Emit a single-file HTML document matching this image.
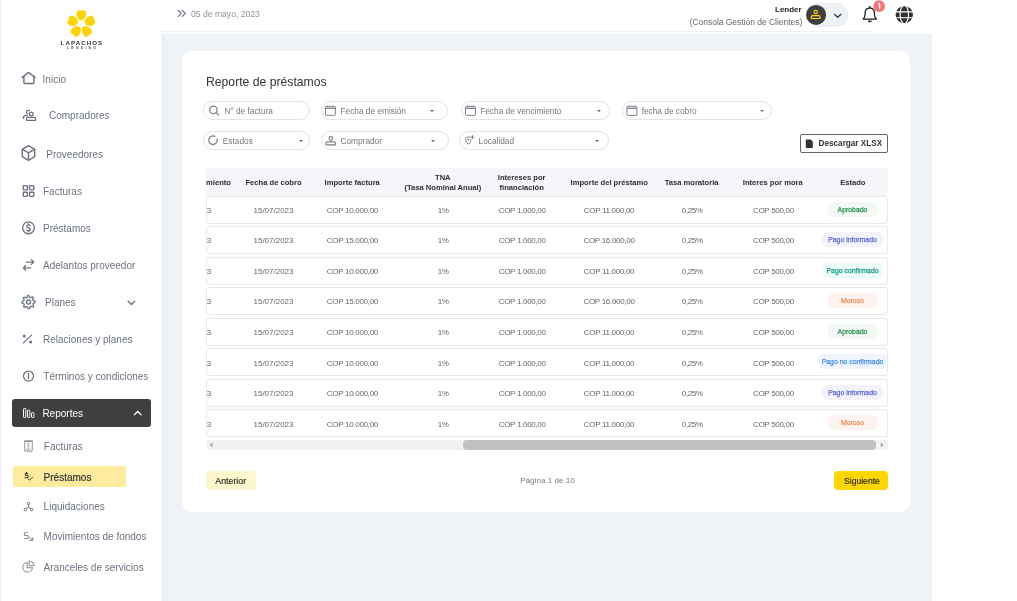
<!DOCTYPE html>
<html><head><meta charset="utf-8">
<style>
*{box-sizing:border-box;margin:0;padding:0}
html,body{width:1017px;height:601px;overflow:hidden;background:#fff;font-family:"Liberation Sans",sans-serif}
.a{position:absolute;white-space:nowrap}
#side{position:absolute;left:0;top:0;width:162px;height:601px;background:#fff;border-left:1px solid #eff2f7;box-shadow:inset 1px 0 0 #f7f8fb}
.nav{position:absolute;font-size:10px;color:#6b7280;line-height:12px;white-space:nowrap}
svg{position:absolute;overflow:visible}
#main{position:absolute;left:162px;top:34px;width:770px;height:567px;background:#eff2f7;box-shadow:inset 1px 0 0 #e2e5ea}
#hdrline{position:absolute;left:161px;top:31px;width:712px;height:1px;background:#eef0f3}
#card{position:absolute;left:182.2px;top:51px;width:727.8px;height:461.2px;background:#fff;border-radius:10px}
.pill{position:absolute;height:19px;border:1px solid #e3e3e3;border-radius:10px;background:#fff}
.pill .t{position:absolute;top:3.8px;font-size:8.3px;color:#777;line-height:10px;white-space:nowrap}
.caret{position:absolute;top:7.5px;width:0;height:0;border-left:2.5px solid transparent;border-right:2.5px solid transparent;border-top:2.5px solid #666}
.th{position:absolute;font-size:7.6px;font-weight:bold;color:#2e2e2e;text-align:center;line-height:10px;white-space:nowrap;transform:translateX(-50%)}
.row{position:absolute;left:206px;width:682px;height:28px;border:1px solid #e8e8e8;border-radius:3px;background:#fff}
.td{position:absolute;font-size:8px;color:#666;line-height:10px;white-space:nowrap;transform:translateX(-50%)}
.bd{position:absolute;height:15.2px;border-radius:6px;font-size:6.9px;line-height:15.2px;-webkit-text-stroke:0.25px currentColor;text-align:center;transform:translateX(-50%);white-space:nowrap}
</style></head><body><div id="root" style="position:absolute;left:0;top:0;width:1017px;height:601px;will-change:transform">
<div id="side"></div>
<div class="nav" style="left:42.6px;top:73.6px">Inicio</div>
<div class="nav" style="left:49px;top:110.4px">Compradores</div>
<div class="nav" style="left:46.3px;top:148.5px">Proveedores</div>
<div class="nav" style="left:43px;top:186.4px">Facturas</div>
<div class="nav" style="left:43px;top:223.0px">Préstamos</div>
<div class="nav" style="left:43px;top:259.8px">Adelantos proveedor</div>
<div class="nav" style="left:45px;top:297.2px">Planes</div>
<div class="nav" style="left:43px;top:333.8px">Relaciones y planes</div>
<div class="nav" style="left:43.3px;top:371.1px">Términos y condiciones</div>
<div class="a" style="left:12px;top:399px;width:139px;height:28px;background:#3f3f3f;border-radius:3px"></div>
<div class="nav" style="left:42.4px;top:407.70000000000005px;color:#fff">Reportes</div>
<div class="a" style="left:12.5px;top:466.4px;width:113.4px;height:20.2px;background:#fdeba0;border-radius:2.5px"></div>
<div class="nav" style="left:43.8px;top:441.4px;color:#6b7280">Facturas</div>
<div class="nav" style="left:43.6px;top:471.5px;color:#333;-webkit-text-stroke:0.2px #333">Préstamos</div>
<div class="nav" style="left:43.6px;top:501.4px;color:#6b7280">Liquidaciones</div>
<div class="nav" style="left:43.6px;top:531.4px;color:#6b7280">Movimientos de fondos</div>
<div class="nav" style="left:43.6px;top:562.4px;color:#6b7280">Aranceles de servicios</div>
<div id="hdrline"></div>
<div class="a" style="left:191px;top:8.5px;font-size:8.6px;color:#8e939b;line-height:10px">05 de mayo, 2023</div>
<div class="a" style="left:775px;top:5px;font-size:8px;font-weight:bold;color:#222;line-height:10px">Lender</div>
<div class="a" style="left:689.7px;top:16.5px;font-size:8.45px;color:#666;line-height:10px">(Consola Gestión de Clientes)</div>
<div id="main"></div>
<div id="card"></div>
<div class="a" style="left:206px;top:74.8px;font-size:12.2px;color:#333;line-height:14px">Reporte de préstamos</div>
<div class="pill" style="left:203.3px;top:101px;width:106.5px"><div class="t" style="left:20.099999999999994px">N° de factura</div></div>
<div class="pill" style="left:320.5px;top:101px;width:127.5px"><div class="t" style="left:19.0px">Fecha de emisión</div><div class="caret" style="left:108.10000000000002px"></div></div>
<div class="pill" style="left:460.5px;top:101px;width:149.5px"><div class="t" style="left:18.69999999999999px">Fecha de vencimiento</div><div class="caret" style="left:135.39999999999998px"></div></div>
<div class="pill" style="left:622px;top:101px;width:150.3px"><div class="t" style="left:18.700000000000045px">fecha de cobro</div><div class="caret" style="left:136.89999999999998px"></div></div>
<div class="pill" style="left:203.3px;top:131px;width:106.5px"><div class="t" style="left:18.5px">Estados</div><div class="caret" style="left:95.0px"></div></div>
<div class="pill" style="left:321px;top:131px;width:127.6px"><div class="t" style="left:18.5px">Comprador</div><div class="caret" style="left:108.69999999999999px"></div></div>
<div class="pill" style="left:459.4px;top:131px;width:149.5px"><div class="t" style="left:18.200000000000045px">Localidad</div><div class="caret" style="left:134.5px"></div></div>
<div class="a" style="left:800px;top:134.2px;width:88px;height:18.8px;border:1px solid #666;border-radius:2px;background:#fff"></div>
<div class="a" style="left:818.5px;top:139.1px;font-size:8.2px;font-weight:bold;color:#333;line-height:10px">Descargar XLSX</div>
<div class="a" style="left:206px;top:168.3px;width:682px;height:27.3px;background:#f5f5fa;border-radius:3px 3px 0 0"></div>
<div class="th" style="left:273.5px;top:178px">Fecha de cobro</div>
<div class="th" style="left:352.2px;top:178px">Importe factura</div>
<div class="th" style="left:442.8px;top:173px">TNA<br>(Tasa Nominal Anual)</div>
<div class="th" style="left:521.7px;top:173px">Intereses por<br>financiación</div>
<div class="th" style="left:609.2px;top:178px">Importe del préstamo</div>
<div class="th" style="left:691.6px;top:178px">Tasa moratoria</div>
<div class="th" style="left:772.8px;top:178px">Interes por mora</div>
<div class="th" style="left:852.8px;top:178px">Estado</div>
<div class="th" style="left:206px;top:178px;transform:none;width:25px;overflow:hidden;direction:rtl;text-align:right">miento</div>
<div class="row" style="top:195.50px"></div>
<div class="td" style="left:209px;top:205.90px">3</div>
<div class="td" style="left:273.5px;top:205.90px;letter-spacing:0px">15/07/2023</div>
<div class="td" style="left:352.4px;top:205.90px;letter-spacing:-0.3px">COP 10.000,00</div>
<div class="td" style="left:443.2px;top:205.90px;letter-spacing:-0.4px">1%</div>
<div class="td" style="left:522.2px;top:205.90px;letter-spacing:-0.3px">COP 1.000,00</div>
<div class="td" style="left:609px;top:205.90px;letter-spacing:-0.3px">COP 11.000,00</div>
<div class="td" style="left:692.2px;top:205.90px;letter-spacing:-0.4px">0,25%</div>
<div class="td" style="left:773.4px;top:205.90px;letter-spacing:-0.3px">COP 500,00</div>
<div class="bd" style="left:852.5px;top:201.50px;width:50.5px;background:#f2f9f4;color:#2f8f55">Aprobado</div>
<div class="row" style="top:226.02px"></div>
<div class="td" style="left:209px;top:236.42px">3</div>
<div class="td" style="left:273.5px;top:236.42px;letter-spacing:0px">15/07/2023</div>
<div class="td" style="left:352.4px;top:236.42px;letter-spacing:-0.3px">COP 15.000,00</div>
<div class="td" style="left:443.2px;top:236.42px;letter-spacing:-0.4px">1%</div>
<div class="td" style="left:522.2px;top:236.42px;letter-spacing:-0.3px">COP 1.000,00</div>
<div class="td" style="left:609px;top:236.42px;letter-spacing:-0.3px">COP 16.000,00</div>
<div class="td" style="left:692.2px;top:236.42px;letter-spacing:-0.4px">0,25%</div>
<div class="td" style="left:773.4px;top:236.42px;letter-spacing:-0.3px">COP 500,00</div>
<div class="bd" style="left:852.5px;top:232.02px;width:61.7px;background:#f3f2fb;color:#5b6bd6">Pago informado</div>
<div class="row" style="top:256.54px"></div>
<div class="td" style="left:209px;top:266.94px">3</div>
<div class="td" style="left:273.5px;top:266.94px;letter-spacing:0px">15/07/2023</div>
<div class="td" style="left:352.4px;top:266.94px;letter-spacing:-0.3px">COP 10.000,00</div>
<div class="td" style="left:443.2px;top:266.94px;letter-spacing:-0.4px">1%</div>
<div class="td" style="left:522.2px;top:266.94px;letter-spacing:-0.3px">COP 1.000,00</div>
<div class="td" style="left:609px;top:266.94px;letter-spacing:-0.3px">COP 11.000,00</div>
<div class="td" style="left:692.2px;top:266.94px;letter-spacing:-0.4px">0,25%</div>
<div class="td" style="left:773.4px;top:266.94px;letter-spacing:-0.3px">COP 500,00</div>
<div class="bd" style="left:852.5px;top:262.54px;width:61.7px;background:#ebfcf8;color:#1e9c86">Pago confirmado</div>
<div class="row" style="top:287.06px"></div>
<div class="td" style="left:209px;top:297.46px">3</div>
<div class="td" style="left:273.5px;top:297.46px;letter-spacing:0px">15/07/2023</div>
<div class="td" style="left:352.4px;top:297.46px;letter-spacing:-0.3px">COP 15.000,00</div>
<div class="td" style="left:443.2px;top:297.46px;letter-spacing:-0.4px">1%</div>
<div class="td" style="left:522.2px;top:297.46px;letter-spacing:-0.3px">COP 1.000,00</div>
<div class="td" style="left:609px;top:297.46px;letter-spacing:-0.3px">COP 16.000,00</div>
<div class="td" style="left:692.2px;top:297.46px;letter-spacing:-0.4px">0,25%</div>
<div class="td" style="left:773.4px;top:297.46px;letter-spacing:-0.3px">COP 500,00</div>
<div class="bd" style="left:852.5px;top:293.06px;width:50.5px;background:#fef2ee;color:#e8935e">Moroso</div>
<div class="row" style="top:317.58px"></div>
<div class="td" style="left:209px;top:327.98px">3</div>
<div class="td" style="left:273.5px;top:327.98px;letter-spacing:0px">15/07/2023</div>
<div class="td" style="left:352.4px;top:327.98px;letter-spacing:-0.3px">COP 10.000,00</div>
<div class="td" style="left:443.2px;top:327.98px;letter-spacing:-0.4px">1%</div>
<div class="td" style="left:522.2px;top:327.98px;letter-spacing:-0.3px">COP 1.000,00</div>
<div class="td" style="left:609px;top:327.98px;letter-spacing:-0.3px">COP 11.000,00</div>
<div class="td" style="left:692.2px;top:327.98px;letter-spacing:-0.4px">0,25%</div>
<div class="td" style="left:773.4px;top:327.98px;letter-spacing:-0.3px">COP 500,00</div>
<div class="bd" style="left:852.5px;top:323.58px;width:50.5px;background:#f2f9f4;color:#2f8f55">Aprobado</div>
<div class="row" style="top:348.10px"></div>
<div class="td" style="left:209px;top:358.50px">3</div>
<div class="td" style="left:273.5px;top:358.50px;letter-spacing:0px">15/07/2023</div>
<div class="td" style="left:352.4px;top:358.50px;letter-spacing:-0.3px">COP 10.000,00</div>
<div class="td" style="left:443.2px;top:358.50px;letter-spacing:-0.4px">1%</div>
<div class="td" style="left:522.2px;top:358.50px;letter-spacing:-0.3px">COP 1.000,00</div>
<div class="td" style="left:609px;top:358.50px;letter-spacing:-0.3px">COP 11.000,00</div>
<div class="td" style="left:692.2px;top:358.50px;letter-spacing:-0.4px">0,25%</div>
<div class="td" style="left:773.4px;top:358.50px;letter-spacing:-0.3px">COP 500,00</div>
<div class="bd" style="left:852.5px;top:354.10px;width:70.4px;background:#eef5fe;color:#4a90e2">Pago no confirmado</div>
<div class="row" style="top:378.62px"></div>
<div class="td" style="left:209px;top:389.02px">3</div>
<div class="td" style="left:273.5px;top:389.02px;letter-spacing:0px">15/07/2023</div>
<div class="td" style="left:352.4px;top:389.02px;letter-spacing:-0.3px">COP 10.000,00</div>
<div class="td" style="left:443.2px;top:389.02px;letter-spacing:-0.4px">1%</div>
<div class="td" style="left:522.2px;top:389.02px;letter-spacing:-0.3px">COP 1.000,00</div>
<div class="td" style="left:609px;top:389.02px;letter-spacing:-0.3px">COP 11.000,00</div>
<div class="td" style="left:692.2px;top:389.02px;letter-spacing:-0.4px">0,25%</div>
<div class="td" style="left:773.4px;top:389.02px;letter-spacing:-0.3px">COP 500,00</div>
<div class="bd" style="left:852.5px;top:384.62px;width:61.7px;background:#f3f2fb;color:#5b6bd6">Pago informado</div>
<div class="row" style="top:409.14px"></div>
<div class="td" style="left:209px;top:419.54px">3</div>
<div class="td" style="left:273.5px;top:419.54px;letter-spacing:0px">15/07/2023</div>
<div class="td" style="left:352.4px;top:419.54px;letter-spacing:-0.3px">COP 10.000,00</div>
<div class="td" style="left:443.2px;top:419.54px;letter-spacing:-0.4px">1%</div>
<div class="td" style="left:522.2px;top:419.54px;letter-spacing:-0.3px">COP 1.000,00</div>
<div class="td" style="left:609px;top:419.54px;letter-spacing:-0.3px">COP 11.000,00</div>
<div class="td" style="left:692.2px;top:419.54px;letter-spacing:-0.4px">0,25%</div>
<div class="td" style="left:773.4px;top:419.54px;letter-spacing:-0.3px">COP 500,00</div>
<div class="bd" style="left:852.5px;top:415.14px;width:50.5px;background:#fef2ee;color:#e8935e">Moroso</div>
<div class="a" style="left:206px;top:440px;width:682px;height:10px;background:#f1f1f1;border-radius:3px"></div>
<div class="a" style="left:463px;top:440px;width:413px;height:10px;background:#c1c1c1;border-radius:4px"></div>
<div class="a" style="left:205.6px;top:470.9px;width:50px;height:19.4px;background:#fef6cc;border-radius:4px"></div>
<div class="a" style="left:215.3px;top:475.5px;font-size:8.8px;color:#2a2a2a;-webkit-text-stroke:0.15px #2a2a2a;line-height:10px">Anterior</div>
<div class="a" style="left:520.2px;top:475.8px;font-size:8.1px;color:#7a7a7a;line-height:10px">Página 1 de 10</div>
<div class="a" style="left:834.2px;top:470.6px;width:54px;height:19.7px;background:#ffd600;border-radius:4px"></div>
<div class="a" style="left:844px;top:475.5px;font-size:8.6px;color:#2a2a2a;-webkit-text-stroke:0.15px #2a2a2a;line-height:10px">Siguiente</div>
<svg width="1017" height="601" style="left:0;top:0;position:absolute" viewBox="0 0 1017 601"><path fill="none" stroke="#6b7280" stroke-width="1.4" stroke-linecap="round" stroke-linejoin="round" d="M21.9,77.6 L28.5,72.4 L35.1,77.6 M23.9,76 V82.6 Q23.9,83.5 24.8,83.5 H33.1 Q34,83.5 34,82.6 V76"/><g fill="none" stroke="#6b7280" stroke-width="1.25" stroke-linecap="round" stroke-linejoin="round"><circle cx="31.3" cy="113.9" r="1.9"/><path d="M26.5,120.3 V118.8 Q26.5,117.4 28,117.4 H34.2 Q35.6,117.4 35.6,118.8 V120.3 Z"/><path d="M29.4,110.6 Q28.9,110.3 28.2,110.3 Q26.4,110.3 26.4,112.1 Q26.4,113.4 27.6,113.8"/><path d="M27.4,115.6 H25.6 Q23.4,115.6 23.4,117.8 V118.4"/></g><g fill="none" stroke="#6b7280" stroke-width="1.4" stroke-linecap="round" stroke-linejoin="round"><path d="M28.5,145.6 L34.7,149.3 V156.7 L28.5,160.3 L22.3,156.7 V149.3 Z"/><path d="M22.5,149.4 L28.5,152.8 L34.5,149.4 M28.5,152.8 V160"/></g><g fill="none" stroke="#6b7280" stroke-width="1.35" stroke-linecap="round" stroke-linejoin="round"><rect x="23.3" y="185.6" width="4.1" height="4.3" rx="0.6"/><rect x="29.5" y="185.6" width="4.3" height="4.3" rx="0.6"/><rect x="23.3" y="192.2" width="4.1" height="4.1" rx="0.6"/><rect x="29.5" y="192.2" width="4.3" height="4.1" rx="0.6"/></g><g fill="none" stroke="#6b7280" stroke-width="1.4" stroke-linecap="round" stroke-linejoin="round"><circle cx="28.5" cy="227.8" r="5.9"/><path d="M30.1,225.6 Q29.6,224.9 28.5,224.9 Q26.8,224.9 26.8,226.4 Q26.8,227.5 28.5,227.8 Q30.3,228.1 30.3,229.3 Q30.3,230.8 28.5,230.8 Q27.2,230.8 26.7,230 M28.5,223.8 V224.9 M28.5,230.8 V231.8"/></g><g fill="none" stroke="#6b7280" stroke-width="1.25" stroke-linecap="round" stroke-linejoin="round"><path d="M26.3,262 H33.5 M31.4,259.6 L33.7,262 L31.4,264.4"/><path d="M30.7,267.9 H23.5 M25.6,265.5 L23.3,267.9 L25.6,270.3"/></g><g fill="none" stroke="#6b7280" stroke-width="1.3" stroke-linecap="round" stroke-linejoin="round"><path d="M27.53,295.57 L28.82,295.51 L29.69,297.35 L30.60,297.67 L32.43,296.80 L33.39,297.67 L32.70,299.58 L33.11,300.45 L35.03,301.13 L35.09,302.42 L33.25,303.29 L32.93,304.20 L33.80,306.03 L32.93,306.99 L31.02,306.30 L30.15,306.71 L29.47,308.63 L28.18,308.69 L27.31,306.85 L26.40,306.53 L24.57,307.40 L23.61,306.53 L24.30,304.62 L23.89,303.75 L21.97,303.07 L21.91,301.78 L23.75,300.91 L24.07,300.00 L23.20,298.17 L24.07,297.21 L25.98,297.90 L26.85,297.49Z"/><circle cx="28.5" cy="302.1" r="2.1"/></g><path fill="none" stroke="#6b7280" stroke-width="1.4" stroke-linecap="round" stroke-linejoin="round" d="M128.2,301.3 L131.5,304.5 L134.7,301.3"/><g fill="#6b7280"><circle cx="24.3" cy="336.1" r="1.5"/><circle cx="30.6" cy="341.9" r="1.5"/></g><path fill="none" stroke="#6b7280" stroke-width="1.25" stroke-linecap="round" stroke-linejoin="round" d="M23.4,342.9 L31.6,335.1"/><g fill="none" stroke="#6b7280" stroke-width="1.3" stroke-linecap="round" stroke-linejoin="round"><circle cx="28.5" cy="376.1" r="5"/><path d="M28.5,373.5 V378.5"/></g><path fill="none" stroke="#fff" stroke-width="1.3" stroke-linecap="round" stroke-linejoin="round" d="M134.3,414.9 L137.7,411.3 L141.1,414.9"/><g fill="none" stroke="#fff" stroke-width="0.95"><rect x="23.5" y="408.5" width="2.3" height="9" rx="0.7"/><rect x="27.5" y="410.2" width="2.3" height="7.3" rx="0.7"/><rect x="31.5" y="412.6" width="2.4" height="4.9" rx="0.7"/></g><g fill="none" stroke="#8a8f98" stroke-width="0.9"><path d="M24.6,441.2 H32.3 V450.9 H24.6 Z"/><path d="M24.4,441.1 H32.5" stroke-width="1.4"/><path d="M29.3,443.4 Q28.9,443.1 28.4,443.1 Q27.4,443.2 27.4,444.1 Q27.5,444.9 28.4,445.2 Q29.4,445.6 29.3,446.4 Q29.2,447.2 28.3,447.2 Q27.7,447.2 27.4,446.9 M26.3,449 H30.6"/></g><g fill="#8a8f98"><rect x="25" y="451.3" width="0.8" height="1" /><rect x="27" y="451.3" width="0.8" height="1"/><rect x="29" y="451.3" width="0.8" height="1"/><rect x="31" y="451.3" width="0.8" height="1"/></g><g fill="none" stroke="#333" stroke-width="1.05" stroke-linecap="round" stroke-linejoin="round"><path d="M27.7,473.4 H25.4 V475.2 H27.4 Q28,475.2 28,476 V477.3 Q28,477.8 27.4,477.8 H24.9 M26.5,472.3 V473.3"/><path d="M28.3,478.9 L29.5,480.3 L32.5,477.2" stroke-width="0.9" stroke-dasharray="0.9 0.5"/></g><g fill="none" stroke="#8a8f98" stroke-width="1.05"><circle cx="28.5" cy="503.5" r="1.3"/><circle cx="25.4" cy="509.6" r="1.3"/><circle cx="31.6" cy="509.6" r="1.3"/><path d="M28.5,504.8 V507 L26.3,508.6 M28.5,507 L30.7,508.6"/></g><g fill="none" stroke="#8a8f98" stroke-width="1.05" stroke-linecap="round" stroke-linejoin="round"><path d="M27.7,532.8 H24.4 V535.4 H27.2 Q28,535.4 28,536.2 V537.9 Q28,538.5 27.3,538.5 H24.2"/><path d="M29.3,537 L32.7,540.4 M29.6,540.4 H32.7 V537.4"/></g><g fill="none" stroke="#8a8f98" stroke-width="1.05" stroke-linejoin="round"><path d="M27.2,562.5 A4.8,4.8 0 1 0 32.4,567.7 H27.2 Z"/><path d="M29.2,560.9 V565.7 H34 A4.8,4.8 0 0 0 29.2,560.9 Z"/></g><path fill="none" stroke="#6b7280" stroke-width="1.25" stroke-linecap="round" stroke-linejoin="round" d="M178.3,10.5 L181.3,13.4 L178.3,16.4 M182.3,10.5 L185.3,13.4 L182.3,16.4"/><rect x="806.2" y="3.4" width="41.8" height="23" rx="11.5" fill="#eef1f6" stroke="#e1e5ec" stroke-width="0.6"/><circle cx="816.1" cy="14.9" r="10" fill="#3f3f3f"/><g fill="none" stroke="#ffd600" stroke-width="1.1"><circle cx="815.7" cy="11.9" r="1.7"/><path d="M811.3,18.5 V16.9 Q811.3,15.6 812.6,15.6 H818.8 Q820.1,15.6 820.1,16.9 V18.5 Z"/></g><path fill="none" stroke="#333" stroke-width="1.2" stroke-linecap="round" stroke-linejoin="round" d="M834.4,14.3 L837.7,17.3 L841,14.3"/><g fill="none" stroke="#1a1a1a" stroke-width="1.25" stroke-linejoin="round"><path d="M863.2,19 H876.3 Q874.4,17.2 874.4,14.6 V12.8 Q874.4,8 869.8,8 Q865.1,8 865.1,12.8 V14.6 Q865.1,17.2 863.2,19 Z"/></g><circle cx="869.8" cy="6.9" r="0.9" fill="#1a1a1a"/><path d="M868.1,21 Q869.8,23.2 871.5,21 Z" fill="#1a1a1a" stroke="#1a1a1a" stroke-width="0.8"/><circle cx="879.2" cy="6.1" r="5.8" fill="#f77474"/><g><circle cx="904.3" cy="14.6" r="8.7" fill="#333"/><g fill="none" stroke="#fff" stroke-width="1.15"><path d="M895,11.8 H913.6 M895,17.7 H913.6"/><ellipse cx="904.3" cy="14.6" rx="4.2" ry="9.2"/></g></g><g fill="none" stroke="#7b8089" stroke-width="1.25" stroke-linecap="round" stroke-linejoin="round"><circle cx="213.4" cy="109.9" r="3.7"/><path d="M216.2,112.7 L218.6,115.1"/></g><path fill="none" stroke="#7b8089" stroke-width="1.25" stroke-linecap="round" stroke-linejoin="round" d="M214.9,136.4 A4.3,4.3 0 1 0 217.1,139"/><g fill="none" stroke="#7b8089" stroke-width="1"><rect x="325.4" y="106.4" width="10" height="9" rx="0.9"/><path d="M325.4,108.3 H335.4" stroke-width="1.3"/><path d="M327.4,105.6 V106.6 M333.4,105.6 V106.6"/></g><g fill="none" stroke="#7b8089" stroke-width="1"><rect x="465.5" y="106.4" width="10" height="9" rx="0.9"/><path d="M465.5,108.3 H475.5" stroke-width="1.3"/><path d="M467.5,105.6 V106.6 M473.5,105.6 V106.6"/></g><g fill="none" stroke="#7b8089" stroke-width="1"><rect x="626.9" y="106.4" width="10" height="9" rx="0.9"/><path d="M626.9,108.3 H636.9" stroke-width="1.3"/><path d="M628.9,105.6 V106.6 M634.9,105.6 V106.6"/></g><g fill="none" stroke="#7b8089" stroke-width="1.2" stroke-linecap="round" stroke-linejoin="round"><circle cx="330.8" cy="138.4" r="1.8"/><path d="M326.1,144.9 V143.2 Q326.1,141.9 327.4,141.9 H334.2 Q335.5,141.9 335.5,143.2 V144.9 Z"/></g><g fill="none" stroke="#7b8089" stroke-width="1" stroke-linecap="round" stroke-linejoin="round"><path d="M470.5,137.6 Q469.6,136.8 468.3,136.8 Q465.6,136.8 465.6,139.6 Q465.6,141.8 468.4,144.3 Q471.1,141.8 471.1,139.9"/><circle cx="468.3" cy="139.6" r="0.6" fill="#6b7280"/><path d="M472.4,135.6 V138.6 M470.9,137.1 H473.9"/></g><path fill="#333" d="M805.8,139.4 H810.6 L812.8,141.6 V147.9 H805.8 Z"/><path fill="#a3a3a3" d="M212.5,442.5 L209.8,445 L212.5,447.5 Z M880.8,442.5 L883.5,445 L880.8,447.5 Z"/></svg>
<svg width="1017" height="601" style="left:0;top:0;position:absolute" viewBox="0 0 1017 601"><path fill="none" stroke="#fff" stroke-width="1.3" stroke-linejoin="round" d="M878.2,4.4 L879.6,3.4 V9.2"/></svg>
<svg width="1017" height="601" style="left:0;top:0;position:absolute" viewBox="0 0 1017 601"><path transform="translate(81.3,23.9) rotate(0)" d="M-2.9,-4.9 L-4,-6.6 L-4.7,-8.8 L-4.8,-10.6 L-4.2,-12.5 L-2.4,-14 L0,-13.2 L2.4,-14 L4.2,-12.5 L4.8,-10.6 L4.7,-8.8 L4,-6.6 L2.9,-4.9 L1.7,-3.6 L1.2,-4.6 L0.6,-2.9 L0,-4.2 L-0.6,-2.9 L-1.2,-4.6 L-1.7,-3.6 Z" fill="#ffd200"/><path transform="translate(81.3,23.9) rotate(72)" d="M-2.9,-4.9 L-4,-6.6 L-4.7,-8.8 L-4.8,-10.6 L-4.2,-12.5 L-2.4,-14 L0,-13.2 L2.4,-14 L4.2,-12.5 L4.8,-10.6 L4.7,-8.8 L4,-6.6 L2.9,-4.9 L1.7,-3.6 L1.2,-4.6 L0.6,-2.9 L0,-4.2 L-0.6,-2.9 L-1.2,-4.6 L-1.7,-3.6 Z" fill="#ffd200"/><path transform="translate(81.3,23.9) rotate(144)" d="M-2.9,-4.9 L-4,-6.6 L-4.7,-8.8 L-4.8,-10.6 L-4.2,-12.5 L-2.4,-14 L0,-13.2 L2.4,-14 L4.2,-12.5 L4.8,-10.6 L4.7,-8.8 L4,-6.6 L2.9,-4.9 L1.7,-3.6 L1.2,-4.6 L0.6,-2.9 L0,-4.2 L-0.6,-2.9 L-1.2,-4.6 L-1.7,-3.6 Z" fill="#ffd200"/><path transform="translate(81.3,23.9) rotate(216)" d="M-2.9,-4.9 L-4,-6.6 L-4.7,-8.8 L-4.8,-10.6 L-4.2,-12.5 L-2.4,-14 L0,-13.2 L2.4,-14 L4.2,-12.5 L4.8,-10.6 L4.7,-8.8 L4,-6.6 L2.9,-4.9 L1.7,-3.6 L1.2,-4.6 L0.6,-2.9 L0,-4.2 L-0.6,-2.9 L-1.2,-4.6 L-1.7,-3.6 Z" fill="#ffd200"/><path transform="translate(81.3,23.9) rotate(288)" d="M-2.9,-4.9 L-4,-6.6 L-4.7,-8.8 L-4.8,-10.6 L-4.2,-12.5 L-2.4,-14 L0,-13.2 L2.4,-14 L4.2,-12.5 L4.8,-10.6 L4.7,-8.8 L4,-6.6 L2.9,-4.9 L1.7,-3.6 L1.2,-4.6 L0.6,-2.9 L0,-4.2 L-0.6,-2.9 L-1.2,-4.6 L-1.7,-3.6 Z" fill="#ffd200"/></svg>
<div class="a" style="left:60.6px;top:38.6px;font-size:6.2px;font-weight:bold;color:#333;letter-spacing:1.05px;line-height:8px;transform:scaleY(0.8);transform-origin:0 50%">LAPACHOS</div>
<div class="a" style="left:67px;top:46.3px;font-size:3.6px;font-weight:bold;color:#555;letter-spacing:2.15px;line-height:5px">LENDING</div>
</div></body></html>
